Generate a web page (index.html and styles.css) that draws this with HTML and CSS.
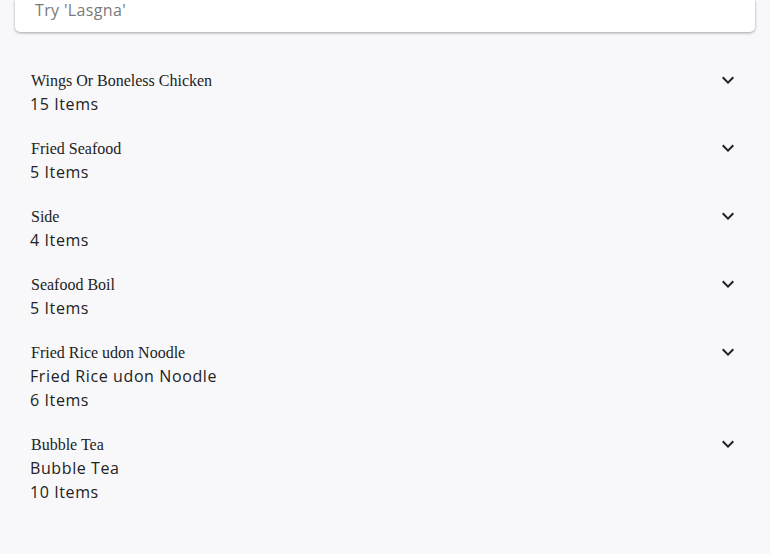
FILE: index.html
```html
<!DOCTYPE html>
<html>
<head>
<meta charset="utf-8">
<link rel="stylesheet" href="styles.css">
</head>
<body>
<div class="page">
  <div class="search"><span class="placeholder">Try 'Lasgna'</span></div>
  <div class="list">
    <div class="cat">
      <div class="head"><span class="title">Wings Or Boneless Chicken</span><svg class="chev" viewBox="0 0 24 24" width="24" height="24"><path d="M16.59 8.59L12 13.17 7.41 8.59 6 10l6 6 6-6z"/></svg></div>
      <div class="line">15 Items</div>
    </div>
    <div class="cat">
      <div class="head"><span class="title">Fried Seafood</span><svg class="chev" viewBox="0 0 24 24" width="24" height="24"><path d="M16.59 8.59L12 13.17 7.41 8.59 6 10l6 6 6-6z"/></svg></div>
      <div class="line">5 Items</div>
    </div>
    <div class="cat">
      <div class="head"><span class="title">Side</span><svg class="chev" viewBox="0 0 24 24" width="24" height="24"><path d="M16.59 8.59L12 13.17 7.41 8.59 6 10l6 6 6-6z"/></svg></div>
      <div class="line">4 Items</div>
    </div>
    <div class="cat">
      <div class="head"><span class="title">Seafood Boil</span><svg class="chev" viewBox="0 0 24 24" width="24" height="24"><path d="M16.59 8.59L12 13.17 7.41 8.59 6 10l6 6 6-6z"/></svg></div>
      <div class="line">5 Items</div>
    </div>
    <div class="cat">
      <div class="head"><span class="title">Fried Rice udon Noodle</span><svg class="chev" viewBox="0 0 24 24" width="24" height="24"><path d="M16.59 8.59L12 13.17 7.41 8.59 6 10l6 6 6-6z"/></svg></div>
      <div class="line">Fried Rice udon Noodle</div>
      <div class="line">6 Items</div>
    </div>
    <div class="cat">
      <div class="head"><span class="title">Bubble Tea</span><svg class="chev" viewBox="0 0 24 24" width="24" height="24"><path d="M16.59 8.59L12 13.17 7.41 8.59 6 10l6 6 6-6z"/></svg></div>
      <div class="line">Bubble Tea</div>
      <div class="line">10 Items</div>
    </div>
  </div>
</div>
</body>
</html>
```
FILE: styles.css
```css
html, body {
  margin: 0;
  padding: 0;
  background: #f8f8fa;
}
.page {
  padding: 0 15px;
}
.search {
  height: 32px;
  background: #ffffff;
  border-radius: 0 0 5px 5px;
  box-shadow: 0 1px 3px rgba(0, 0, 0, 0.35);
  padding: 0 20px;
  box-sizing: border-box;
}
.placeholder {
  display: block;
  font-family: "Open Sans", sans-serif;
  font-size: 16px;
  line-height: 20px;
  letter-spacing: 0.35px;
  color: #7a7a7a;
}
.list {
  margin-top: 36px;
  padding: 0 15px;
}
.cat {
  margin-bottom: 20px;
}
.head {
  display: flex;
  align-items: center;
  justify-content: space-between;
  height: 24px;
}
.title {
  font-family: "Liberation Serif", serif;
  font-size: 16px;
  line-height: 24px;
  color: #222222;
  padding-left: 1px;
  padding-top: 1px;
}
.chev {
  fill: #222222;
  display: block;
}
.line {
  font-family: "Open Sans", sans-serif;
  font-size: 16px;
  line-height: 24px;
  letter-spacing: 0.6px;
  color: #222222;
}
```
